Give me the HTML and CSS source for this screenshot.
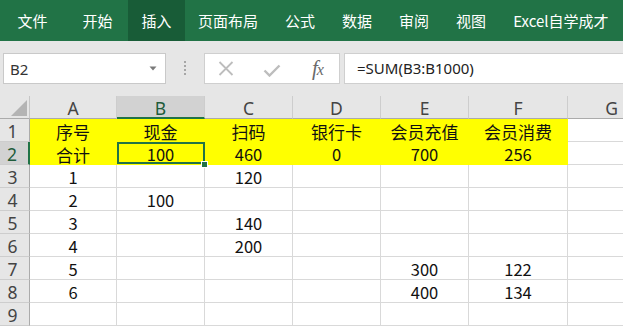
FILE: index.html
```html
<!DOCTYPE html>
<html lang="zh-CN">
<head>
<meta charset="utf-8">
<title>Excel</title>
<link rel="stylesheet" href="styles.css">
</head>
<body>
<div class="app">
  <nav class="ribbon">
    <span class="tab tab-first">文件</span>
    <span class="tab">开始</span>
    <span class="tab tab-active">插入</span>
    <span class="tab">页面布局</span>
    <span class="tab">公式</span>
    <span class="tab">数据</span>
    <span class="tab">审阅</span>
    <span class="tab">视图</span>
    <span class="tab">Excel自学成才</span>
  </nav>

  <div class="fbar">
    <div class="namebox">
      <span class="namebox-text">B2</span>
      <svg class="caret" width="8" height="5" viewBox="0 0 8 5"><path d="M0.5 0.5h7L4 4.5z" fill="#7a7a7a"/></svg>
    </div>
    <div class="grip">
      <svg width="4" height="15" viewBox="0 0 4 15">
        <rect x="1" y="0" width="2" height="2" fill="#a6a6a6"/>
        <rect x="1" y="4" width="2" height="2" fill="#a6a6a6"/>
        <rect x="1" y="8" width="2" height="2" fill="#a6a6a6"/>
        <rect x="1" y="12" width="2" height="2" fill="#a6a6a6"/>
      </svg>
    </div>
    <div class="fbtns">
      <svg class="ico ico-x" width="16" height="15" viewBox="0 0 16 15"><path d="M1.5 1L14.5 14M14.5 1L1.5 14" stroke="#bdbdbd" stroke-width="1.8" fill="none"/></svg>
      <svg class="ico ico-check" width="18" height="13" viewBox="0 0 18 13"><path d="M1.5 6.5L6.5 11.5L16.5 1.5" stroke="#bdbdbd" stroke-width="2.4" fill="none"/></svg>
      <span class="fx">f<span class="fx-x">x</span></span>
    </div>
    <div class="finput">=SUM(B3:B1000)</div>
  </div>

  <div class="sheet">
    <div class="cell corner"><svg class="corner-tri" width="16" height="16" viewBox="0 0 16 16"><path d="M16 0V16H0z" fill="#b4b4b4"/></svg></div>
    <div class="cell ch">A</div>
    <div class="cell ch ch-sel">B</div>
    <div class="cell ch">C</div>
    <div class="cell ch">D</div>
    <div class="cell ch">E</div>
    <div class="cell ch">F</div>
    <div class="cell ch">G</div>

    <div class="cell rh">1</div>
    <div class="cell fill cjk">序号</div>
    <div class="cell fill cjk">现金</div>
    <div class="cell fill cjk">扫码</div>
    <div class="cell fill cjk">银行卡</div>
    <div class="cell fill cjk">会员充值</div>
    <div class="cell fill cjk">会员消费</div>
    <div class="cell"></div>

    <div class="cell rh rh-sel">2</div>
    <div class="cell fill cjk">合计</div>
    <div class="cell fill sel">100</div>
    <div class="cell fill">460</div>
    <div class="cell fill">0</div>
    <div class="cell fill">700</div>
    <div class="cell fill">256</div>
    <div class="cell"></div>

    <div class="cell rh">3</div>
    <div class="cell">1</div>
    <div class="cell"></div>
    <div class="cell">120</div>
    <div class="cell"></div>
    <div class="cell"></div>
    <div class="cell"></div>
    <div class="cell"></div>

    <div class="cell rh">4</div>
    <div class="cell">2</div>
    <div class="cell">100</div>
    <div class="cell"></div>
    <div class="cell"></div>
    <div class="cell"></div>
    <div class="cell"></div>
    <div class="cell"></div>

    <div class="cell rh">5</div>
    <div class="cell">3</div>
    <div class="cell"></div>
    <div class="cell">140</div>
    <div class="cell"></div>
    <div class="cell"></div>
    <div class="cell"></div>
    <div class="cell"></div>

    <div class="cell rh">6</div>
    <div class="cell">4</div>
    <div class="cell"></div>
    <div class="cell">200</div>
    <div class="cell"></div>
    <div class="cell"></div>
    <div class="cell"></div>
    <div class="cell"></div>

    <div class="cell rh">7</div>
    <div class="cell">5</div>
    <div class="cell"></div>
    <div class="cell"></div>
    <div class="cell"></div>
    <div class="cell">300</div>
    <div class="cell">122</div>
    <div class="cell"></div>

    <div class="cell rh">8</div>
    <div class="cell">6</div>
    <div class="cell"></div>
    <div class="cell"></div>
    <div class="cell"></div>
    <div class="cell">400</div>
    <div class="cell">134</div>
    <div class="cell"></div>

    <div class="cell rh">9</div>
    <div class="cell"></div>
    <div class="cell"></div>
    <div class="cell"></div>
    <div class="cell"></div>
    <div class="cell"></div>
    <div class="cell"></div>
    <div class="cell"></div>
  </div>
</div>
</body>
</html>
```

FILE: styles.css
```css
html, body {
  margin: 0;
  padding: 0;
}
body {
  width: 623px;
  height: 328px;
  overflow: hidden;
  background: #ffffff;
  font-family: "Noto Sans", "Noto Sans CJK SC", sans-serif;
}
.app {
  width: 623px;
  overflow: hidden;
}

/* Ribbon */
.ribbon {
  display: flex;
  height: 41px;
  background: #217346;
  color: #ffffff;
  font: 15px "Noto Sans CJK SC", sans-serif;
  padding-left: 4px;
  white-space: nowrap;
}
.tab {
  display: flex;
  align-items: center;
  padding: 0 13.5px;
}
.tab-first {
  margin-right: 8px;
}
.tab-active {
  background: #185c37;
  padding: 0 13px 0 13.5px;
  margin-left: 2px;
}

/* Formula bar */
.fbar {
  display: flex;
  align-items: flex-start;
  height: 55px;
  box-sizing: border-box;
  padding: 12px 0 0 3px;
  background: #e6e6e6;
}
.namebox {
  width: 163px;
  height: 31px;
  box-sizing: border-box;
  border: 1px solid #c9c9c9;
  background: #ffffff;
  display: flex;
  align-items: center;
  justify-content: space-between;
  padding: 0 8px 0 6px;
}
.namebox-text {
  font: 15px "Noto Sans", sans-serif;
  color: #333333;
}
.grip {
  width: 38px;
  height: 31px;
  display: flex;
  align-items: center;
  justify-content: center;
}
.fbtns {
  width: 136px;
  height: 31px;
  box-sizing: border-box;
  border: 1px solid #cfcfcf;
  background: #ffffff;
  display: flex;
  align-items: center;
  padding-left: 13px;
}
.ico-x {
  margin-right: 29px;
}
.ico-check {
  margin-top: 3px;
  margin-right: 31px;
}
.fx {
  font: italic 21px "Liberation Serif", serif;
  color: #6a6a6a;
  letter-spacing: -1px;
}
.fx-x {
  font-size: 16px;
}
.finput {
  flex: 1;
  margin-left: 4px;
  height: 31px;
  box-sizing: border-box;
  border: 1px solid #cfcfcf;
  border-right: none;
  background: #ffffff;
  padding-left: 12px;
  font: 15px/29px "Noto Sans", sans-serif;
  color: #222222;
  white-space: nowrap;
}

/* Sheet grid */
.sheet {
  display: grid;
  grid-template-columns: 30px 87px 88px 88px 88px 88px 99px 88px;
  grid-template-rows: 23px;
  grid-auto-rows: 23px;
  width: 666px;
}
.cell {
  box-sizing: border-box;
  border-right: 1px solid #d9d9d9;
  border-bottom: 1px solid #d9d9d9;
  text-align: center;
  font: 16.5px/22px "Noto Sans CJK SC", sans-serif;
  color: #111111;
  padding-top: 1px;
  white-space: nowrap;
  overflow: visible;
}
.cjk {
  font-size: 17px;
  line-height: 21px;
  padding-top: 1.5px;
}
.corner {
  background: #e6e6e6;
  border-right: 1px solid #c6c6c6;
  border-bottom: 1px solid #ababab;
  position: relative;
  padding: 0;
}
.corner-tri {
  position: absolute;
  right: 2px;
  bottom: 2px;
}
.ch {
  background: #e6e6e6;
  border-right: 1px solid #cdcdcd;
  border-bottom: 1px solid #ababab;
  color: #444444;
  font: 17.5px/22px "Noto Sans", sans-serif;
  padding-top: 1px;
}
.ch-sel {
  background: #d2d2d2;
  border-bottom: 2px solid #217346;
  color: #1f5c3a;
}
.rh {
  background: #e6e6e6;
  border-right: 1px solid #ababab;
  border-bottom: 1px solid #cdcdcd;
  color: #444444;
  font: 17.5px/22px "Noto Sans", sans-serif;
  padding-right: 4px;
}
.rh-sel {
  background: #d2d2d2;
  border-right: 2px solid #217346;
  color: #1f5c3a;
}
.fill {
  background: #ffff00;
  border-right-color: #ffff00;
  border-bottom-color: #ffff00;
}
.sel {
  position: relative;
  z-index: 2;
}
.sel::after {
  content: "";
  position: absolute;
  left: 0;
  top: 0;
  right: -1px;
  bottom: 0;
  border: 2px solid #217346;
}
.sel::before {
  content: "";
  position: absolute;
  right: -4px;
  bottom: -4px;
  width: 5px;
  height: 5px;
  background: #217346;
  border: 1px solid #ffffff;
  z-index: 3;
}
```
